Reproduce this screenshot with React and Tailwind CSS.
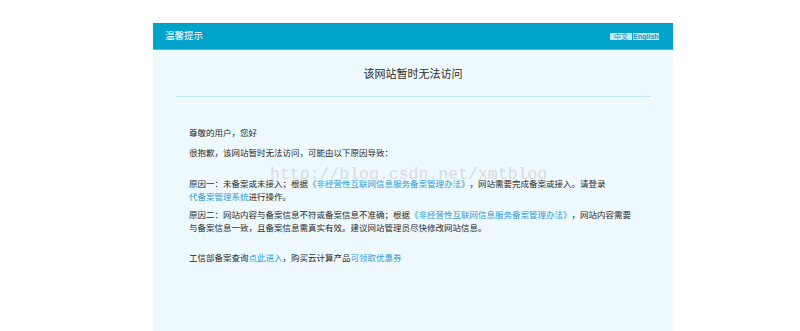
import React from 'react';

const CJK = { fontFamily: '"Noto Sans CJK SC", "Liberation Sans", sans-serif' };

function Link({ children, nowrap }) {
  return (
    <a href="#" className={nowrap ? 'text-[#2f9bd6] whitespace-nowrap' : 'text-[#2f9bd6]'}>
      {children}
    </a>
  );
}

export default function App() {
  return (
    <div className="w-[800px] h-[331px] bg-white overflow-hidden pt-[23px] [text-spacing-trim:space-all]" style={CJK}>
      <div className="relative ml-[153px] w-[520px] h-[308px] bg-[#eef9fe]">
        <div className="h-[27px] bg-[#00a3ca] border-b border-[#4cbddb] flex items-center justify-between pl-[12px] pr-[14px]">
          <span className="text-white text-[9.5px] leading-none">温馨提示</span>
          <div className="flex gap-[1px] mt-[1px]">
            <span className="h-[7px] w-[22px] bg-[#bfe7f5] text-[#1f95c1] text-[7px] leading-[7px] text-center">中文</span>
            <span
              className="h-[7px] w-[26px] bg-[#bfe7f5] text-[#1f95c1] text-[7px] leading-[7px] text-center font-bold"
              style={{ fontFamily: '"Liberation Sans", sans-serif' }}
            >
              English
            </span>
          </div>
        </div>

        <h1 className="pt-[17px] text-center text-[11px] leading-[12px] text-[#2b2b2b]">该网站暂时无法访问</h1>
        <div className="mt-[17px] ml-[23px] mr-[22px] h-px bg-[#bde3f1]" />

        <div className="pl-[36px] pr-[36px] pt-[29px] text-[8.5px] leading-[13px] text-[#2b2b2b]">
          <p>尊敬的用户，您好</p>
          <p className="mt-[7px]">很抱歉，该网站暂时无法访问，可能由以下原因导致：</p>
          <p className="mt-[18px]">
            原因一：未备案或未接入；根据<Link>《非经营性互联网信息服务备案管理办法》</Link>，网站需要完成备案或接入。请登录
            <Link nowrap>代备案管理系统</Link>进行操作。
          </p>
          <p className="mt-[5px]">
            原因二：网站内容与备案信息不符或备案信息不准确；根据<Link>《非经营性互联网信息服务备案管理办法》</Link>，网站内容需要与备案信息一致，且备案信息需真实有效。建议网站管理员尽快修改网站信息。
          </p>
          <p className="mt-[17px]">
            工信部备案查询<Link>点此进入</Link>，购买云计算产品<Link>可领取优惠券</Link>
          </p>
        </div>

        <span
          className="absolute left-[117px] top-[142px] text-[16.5px] leading-[20px] text-[#c8c8c8]/60 pointer-events-none"
          style={{ fontFamily: '"Liberation Mono", monospace' }}
        >
          http://blog.csdn.net/xmtblog
        </span>
      </div>
    </div>
  );
}
